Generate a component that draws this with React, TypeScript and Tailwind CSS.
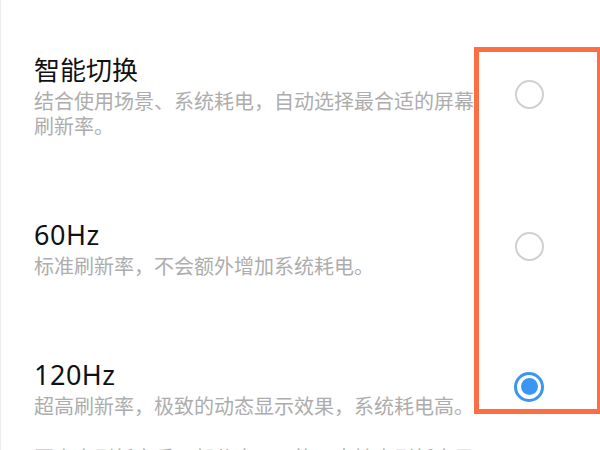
const options = [
  {
    title: "智能切换",
    desc: "结合使用场景、系统耗电，自动选择最合适的屏幕刷新率。",
    checked: false,
    latin: false,
  },
  {
    title: "60Hz",
    desc: "标准刷新率，不会额外增加系统耗电。",
    checked: false,
    latin: true,
  },
  {
    title: "120Hz",
    desc: "超高刷新率，极致的动态显示效果，系统耗电高。",
    checked: true,
    latin: true,
  },
];

function Radio({ checked }: { checked: boolean }) {
  if (checked) {
    return (
      <div className="w-[30px] h-[30px] rounded-full border-[3px] border-[#3b96f3] flex items-center justify-center">
        <div className="w-[17px] h-[17px] rounded-full bg-[#3b96f3]" />
      </div>
    );
  }
  return <div className="w-[29px] h-[29px] rounded-full border-2 border-[#d0d0d0]" />;
}

export default function App() {
  return (
    <div
      className="relative w-[600px] h-[450px] overflow-hidden bg-white border-l border-[#ededed]"
      style={{ fontFamily: '"Noto Sans", "Noto Sans CJK SC", sans-serif' }}
    >
      <div className="flex flex-col gap-[79px] pt-[53px] pl-[33px] pr-[56px]">
        {options.map((o) => (
          <div key={o.title} className="flex items-center justify-between">
            <div className="w-[446px] flex flex-col gap-[2px]">
              <div
                className={
                  o.latin
                    ? "text-[27px] leading-[34px] tracking-[0.5px] text-[#111111]"
                    : "text-[26px] leading-[34px] text-[#111111]"
                }
              >
                {o.title}
              </div>
              <div className="text-[20px] leading-[25px] text-[#adadad]">{o.desc}</div>
            </div>
            <div className="mb-[4px]">
              <Radio checked={o.checked} />
            </div>
          </div>
        ))}
      </div>
      <div className="mt-[27px] pl-[33px] w-[480px] text-[20px] leading-[25px] text-[#adadad]">
        开启高刷新率后，部分应用可能不支持高刷新率显示。
      </div>

      {/* annotation box over the radio column */}
      <div className="absolute left-[473px] top-[47px] w-[128px] h-[367px] border-[5px] border-[#fd6f43]" />
    </div>
  );
}
